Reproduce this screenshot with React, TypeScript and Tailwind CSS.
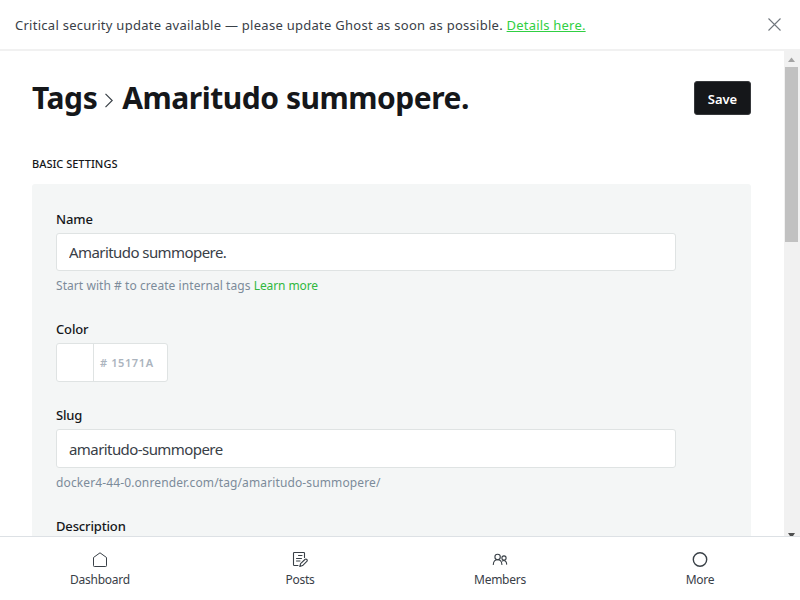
import React from "react";

type IconProps = { className?: string };

const HomeIcon = ({ className }: IconProps) => (
  <svg className={className} viewBox="0 0 16 16" width="16" height="16" fill="none" stroke="#394047" strokeWidth="1" strokeLinejoin="round">
    <path d="M1.500 5.500V13.700a.8.8 0 0 0 .8.8H13.700a.8.8 0 0 0 .8-.8V5.500L8 .8Z" />
  </svg>
);

const PostsIcon = ({ className }: IconProps) => (
  <svg className={className} viewBox="0 0 16 16" width="16" height="16" fill="none" stroke="#394047" strokeWidth="1.1" strokeLinecap="round" strokeLinejoin="round">
    <path d="M6 13.500H2.300a.8.8 0 0 1-.8-.8V1.300a.8.8 0 0 1 .8-.8h9.400a.8.8 0 0 1 .8.8V5.500" />
    <path d="M6.500 3.500h3.500M4.500 6.500h5M4.500 9h3.500" strokeWidth="1" />
    <path d="M7.800 14.500l.8-2.800 4.300-4.200a1.300 1.300 0 0 1 1.900 1.900L10.600 13.600Z" />
  </svg>
);

const MembersIcon = ({ className }: IconProps) => (
  <svg className={className} viewBox="0 0 16 16" width="16" height="16" fill="none" stroke="#394047" strokeWidth="1.1" strokeLinecap="round">
    <circle cx="5.600" cy="5" r="2.700" />
    <path d="M1.300 12.500c.2-2.900 1.900-4.700 4.300-4.700S9.700 9.600 9.900 12.500" />
    <circle cx="12" cy="6" r="2.100" />
    <path d="M10.300 8.900c2.400-1.300 4.200.4 4.400 3.200" />
  </svg>
);

const MoreIcon = ({ className }: IconProps) => (
  <svg className={className} viewBox="0 0 16 16" width="16" height="16" fill="none" stroke="#394047" strokeWidth="1.4">
    <circle cx="8" cy="7.500" r="6.700" />
  </svg>
);

const tabs = [
  { label: "Dashboard", Icon: HomeIcon },
  { label: "Posts", Icon: PostsIcon },
  { label: "Members", Icon: MembersIcon },
  { label: "More", Icon: MoreIcon },
];

const labelClass = "block h-[18px] text-[13px] leading-[18px] font-medium tracking-[-0.15px]";
const inputClass = "block w-[620px] rounded-[3px] border border-[#dfe3e3] bg-white px-3 text-[15px] tracking-[-0.57px] text-[#394047] outline-none";

export default function App() {
  return (
    <div className="flex h-[600px] w-[800px] flex-col overflow-hidden bg-white font-['Noto_Sans',sans-serif] whitespace-nowrap text-[#15171a]">
      <aside className="flex h-[51px] shrink-0 items-center justify-between border-b-2 border-[#f1f1f1] pr-[19px] pl-[15px]">
        <p className="text-[13px] leading-5 tracking-[0.27px] text-[#394047]">
          <span>Critical security update available — please update Ghost as soon as possible. </span>
          <a className="tracking-[0.2px] text-[#30cf43] underline">Details here.</a>
        </p>
        <svg width="13" height="13" viewBox="0 0 13 13" stroke="#70767d" strokeWidth="1.1">
          <path d="M.5.5l12 12M12.500.5l-12 12" />
        </svg>
      </aside>

      <div className="flex h-[485px] shrink-0 overflow-hidden">
        <main className="w-[784px] overflow-hidden pr-[33px] pl-8">
          <header className="mt-[30px] flex h-[34px] items-center justify-between">
            <h1 className="flex items-center text-[30px] leading-[34px] font-bold">
              <span className="tracking-[-0.4px]">Tags</span>
              <svg className="mr-[9px] ml-2 mt-1" width="8" height="15" viewBox="0 0 8 15" fill="none" stroke="#394047" strokeWidth="1.2">
                <path d="M.5.8l6.700 6.700-6.700 6.700" />
              </svg>
              <span className="tracking-[-0.48px]">Amaritudo summopere.</span>
            </h1>
            <button className="flex h-[34px] w-[57px] items-center justify-center rounded-[3px] border border-[#36383b] bg-[#15171a] pt-[3px] text-[13px] font-semibold text-white">
              Save
            </button>
          </header>

          <h4 className="mt-10 h-[18px] text-[11px] leading-[18px] font-medium">BASIC SETTINGS</h4>

          <section className="mt-[11px] h-[600px] rounded-[3px] bg-[#f4f6f6] px-6 pt-[26px]">
            <label className={labelClass}>Name</label>
            <input className={inputClass + " mt-[5px] h-[38px]"} defaultValue="Amaritudo summopere." />
            <p className="mt-1.5 h-[18px] text-[12px] leading-[18px] tracking-[0.06px] text-[#7c8b9a]">
              Start with # to create internal tags <a className="tracking-[-0.1px] text-[#30b83f]">Learn more</a>
            </p>

            <label className={labelClass + " mt-[25px]"}>Color</label>
            <div className="mt-[5px] flex h-[39px] w-[112px] overflow-hidden rounded-[3px] border border-[#dfe3e3] bg-white">
              <div className="w-[37px] border-r border-[#dfe3e3]" />
              <div className="flex items-center pt-px pl-1.5 text-[11px] font-semibold tracking-[0.6px] text-[#abb4be]">
                <span># 15171A</span>
              </div>
            </div>

            <label className={labelClass + " mt-6"}>Slug</label>
            <input className={inputClass + " mt-[5px] h-[39px]"} defaultValue="amaritudo-summopere" />
            <p className="mt-1.5 h-[18px] text-[12px] leading-[18px] tracking-[0.12px] text-[#7c8b9a]">docker4-44-0.onrender.com/tag/amaritudo-summopere/</p>

            <label className={labelClass + " mt-[25px]"}>Description</label>
          </section>
        </main>

        <div className="flex w-4 flex-col items-center justify-between bg-[#f1f1f1]">
          <div>
            <svg className="block" width="16" height="16" viewBox="0 0 16 16" fill="#a3a3a3">
              <path d="M4 11l3.500-4.500L11 11Z" />
            </svg>
            <div className="ml-px h-[175px] w-[13px] bg-[#c1c1c1]" />
          </div>
          <svg className="block" width="16" height="4" viewBox="0 0 16 4" fill="#505050">
            <path d="M4 1h7L9 4H6Z" />
          </svg>
        </div>
      </div>

      <nav className="grid h-16 shrink-0 grid-cols-4 border-t border-[#dde1e5] bg-white">
        {tabs.map(({ label, Icon }) => (
          <a key={label} className="flex flex-col items-center pt-[15px] text-[12px] leading-[18px] tracking-[-0.25px] text-[#394047]">
            <Icon />
            <span className="mt-[3px]">{label}</span>
          </a>
        ))}
      </nav>
    </div>
  );
}
